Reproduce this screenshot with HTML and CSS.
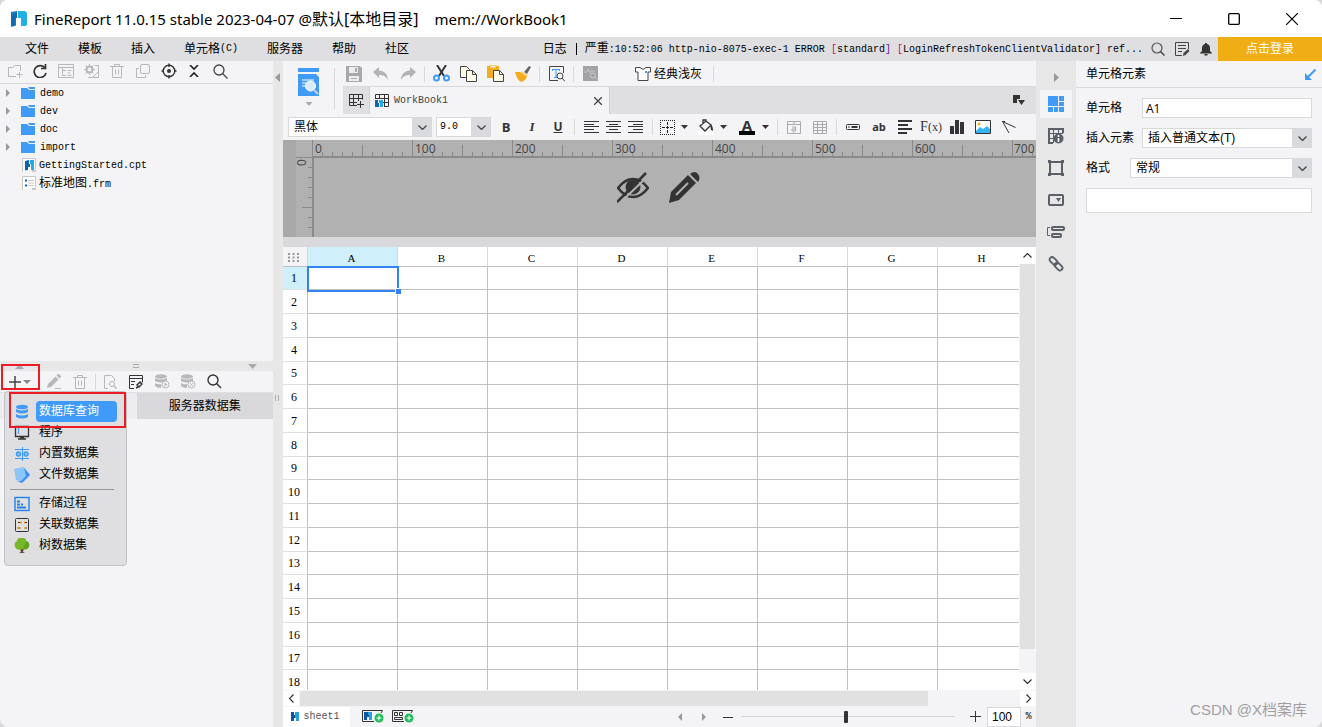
FILE: index.html
```html
<!DOCTYPE html>
<html lang="zh-CN">
<head>
<meta charset="utf-8">
<title>FineReport</title>
<link rel="stylesheet" href="styles.css">
</head>
<body>
<div class="window">
<header class="titlebar">
<svg class="logo" width="18" height="18" viewBox="0 0 18 18"><path d="M1 2l6-1v7h4v3H8v4l-7 2z" fill="#0f7fc8"/><path d="M8 1h7l2 2v12l-2 1h-4V8H8z" fill="#22aee6"/><path d="M1 5l6-3v6H5v7l-4 1z" fill="#1569ad"/><path d="M7 8h4v3H8v5H6V8z" fill="#fff"/></svg>
<h1>FineReport 11.0.15 stable 2023-04-07 @<span>默认[本地目录]</span></h1>
<span class="doc">mem://WorkBook1</span>
<div class="wbtns">
<button aria-label="最小化"><svg width="12" height="12" viewBox="0 0 12 12"><path d="M0 5.500h12" stroke="#000"/></svg></button>
<button aria-label="最大化"><svg width="12" height="12" viewBox="0 0 12 12"><rect x=".7" y=".7" width="10.600" height="10.600" rx="1" fill="none" stroke="#000" stroke-width="1.300"/></svg></button>
<button aria-label="关闭"><svg width="12" height="12" viewBox="0 0 12 12"><path d="M0 0l12 12M12 0L0 12" stroke="#000" stroke-width="1.200"/></svg></button>
</div>
</header>
<nav class="menubar">
<button>文件</button><button>模板</button><button>插入</button><button>单元格<span class="mono">(C)</span></button><button>服务器</button><button>帮助</button><button>社区</button>
<div class="log"><span>日志</span><i></i><span>严重<span class="mono">:10:52:06 http-nio-8075-exec-1 ERROR <b>[</b>standard<em>]</em> <b>[</b>LoginRefreshTokenClientValidator] ref...</span></span></div>
<button class="mi" aria-label="搜索"><svg width="14" height="14" viewBox="0 0 14 14"><circle cx="6" cy="6" r="5" fill="none" stroke="#555"  stroke-width="1.200"/><path d="M9.500 9.500l4 4" stroke="#444" stroke-width="1.500"/></svg></button>
<button class="mi" aria-label="笔记"><svg width="15" height="15" viewBox="0 0 15 15" fill="none" stroke="#444"><path d="M13.500 7V.5h-13v13H7M3 3.500h8M3 6.500h8M3 9.500h4"/><path d="M13 7l1.500 2-4 4-2.500 1 .5-3z" fill="#444" stroke="none"/></svg></button>
<button class="mi" aria-label="通知"><svg width="12" height="14" viewBox="0 0 12 14" fill="#333"><path d="M5 1h2v1c2 .5 3 2 3 4v3l2 2v.5H0V11l2-2V6c0-2 1-3.500 3-4zM4.500 12h3v1.500h-3z"/></svg></button>
<button class="login">点击登录</button>
</nav>
<main class="main">
<aside class="left">
<div class="tools tree-tools">
<button aria-label="新建文件夹"><svg width="16" height="14" viewBox="0 0 16 14" fill="none" stroke="#b8b8bb"><path d="M9 12.500H1.500v-9H6l1.500-2h6V7M12.500 8v6M9.500 10.500h6"/></svg></button>
<button aria-label="刷新"><svg width="14" height="14" viewBox="0 0 14 14" fill="none" stroke="#333" stroke-width="1.700"><path d="M12 4a6 6 0 1 0 1 5"/><path d="M12.500 0v4.500H8"/></svg></button>
<button aria-label="详情"><svg width="16" height="14" viewBox="0 0 16 14" fill="none" stroke="#b8b8bb"><path d="M.5.500h15v13H.5zM0 3.500h16M4.500 4v8M4 6.500h4M4 11.500h4M9.500 6.500h4M9.500 9h3M9.500 11.500h4"/></svg></button>
<button aria-label="设置"><svg width="16" height="14" viewBox="0 0 16 14" fill="none" stroke="#b8b8bb"><circle cx="5.500" cy="5.500" r="3" stroke-width="2"/><path d="M5.500 0v2M5.500 9v2M0 5.500h2M9 5.500h2M1.500 1.500l1.500 1.500M8 8l1.500 1.500M9.500 1.500L8 3M1.500 9.500L3 8M11 1.500h3.500v12H4M9 13l5-5"/></svg></button>
<button aria-label="删除"><svg width="14" height="14" viewBox="0 0 14 14" fill="none" stroke="#b8b8bb"><path d="M0 2.500h14M4.500 2V.5h5V2M2.500 3v10.500h9V3M5.500 5.500v5M8.500 5.500v5"/></svg></button>
<button aria-label="复制"><svg width="14" height="14" viewBox="0 0 14 14" fill="none" stroke="#b8b8bb"><rect x="4.500" y=".5" width="9" height="9" rx="1.500"/><path d="M3 4.500H.5v9h9V11"/></svg></button>
<button aria-label="定位"><svg width="16" height="16" viewBox="0 0 16 16" fill="none" stroke="#333" stroke-width="1.400"><circle cx="8" cy="8" r="5.800"/><path d="M8 .5V4M8 12v3.500M.5 8H3M13 8h2.500"/><circle cx="8" cy="8" r="2" fill="#333" stroke="none"/></svg></button>
<button aria-label="折叠"><svg width="10" height="12" viewBox="0 0 10 12" fill="none" stroke="#222" stroke-width="1.600"><path d="M1 0l4 4 4-4M1 12l4-4 4 4"/></svg></button>
<button aria-label="搜索"><svg width="15" height="15" viewBox="0 0 15 15" fill="none" stroke="#444" stroke-width="1.300"><circle cx="6" cy="6" r="5"/><path d="M9.500 9.500l5 5"/></svg></button>
</div>
<ul class="tree">
<li><svg class="tw" width="5" height="8" viewBox="0 0 5 8"><path d="M0 0l4 4-4 4z" fill="#999"/></svg><svg class="fd" width="14" height="12" viewBox="0 0 14 12"><path d="M0 1h6l2 2h6v9H0z" fill="#409bf8"/><path d="M7 0h7v2H8.500z" fill="#409bf8"/></svg><span class="mono">demo</span></li>
<li><svg class="tw" width="5" height="8" viewBox="0 0 5 8"><path d="M0 0l4 4-4 4z" fill="#999"/></svg><svg class="fd" width="14" height="12" viewBox="0 0 14 12"><path d="M0 1h6l2 2h6v9H0z" fill="#409bf8"/><path d="M7 0h7v2H8.500z" fill="#409bf8"/></svg><span class="mono">dev</span></li>
<li><svg class="tw" width="5" height="8" viewBox="0 0 5 8"><path d="M0 0l4 4-4 4z" fill="#999"/></svg><svg class="fd" width="14" height="12" viewBox="0 0 14 12"><path d="M0 1h6l2 2h6v9H0z" fill="#409bf8"/><path d="M7 0h7v2H8.500z" fill="#409bf8"/></svg><span class="mono">doc</span></li>
<li><svg class="tw" width="5" height="8" viewBox="0 0 5 8"><path d="M0 0l4 4-4 4z" fill="#999"/></svg><svg class="fd" width="14" height="12" viewBox="0 0 14 12"><path d="M0 1h6l2 2h6v9H0z" fill="#409bf8"/><path d="M7 0h7v2H8.500z" fill="#409bf8"/></svg><span class="mono">import</span></li>
<li class="leaf"><svg width="14" height="14" viewBox="0 0 14 14"><path d="M.5 14V.5h13V11" fill="#fff" stroke="#c8c8c8"/><path d="M3 3l4-1v4h1v3H6v3l-3 .5z" fill="#0b67b1"/><path d="M8 2h4v10H9V6H8z" fill="#24a9e6"/><path d="M10 13h4" stroke="#c8c8c8" stroke-width="2"/></svg><span class="mono">GettingStarted.cpt</span></li>
<li class="leaf"><svg width="14" height="14" viewBox="0 0 14 14"><path d="M.5 14V.5h13V11" fill="#fff" stroke="#c8c8c8"/><path d="M3 4.500h2M3 9.500h2" stroke="#0b67b1" stroke-width="2"/><path d="M6 4.500h6M6 7h6M6 9.500h6" stroke="#c8c8c8"/><path d="M10 13h4" stroke="#c8c8c8" stroke-width="2"/></svg><span>标准地图<span class="mono">.frm</span></span></li>
</ul>
<div class="hsplit"><svg width="9" height="5" viewBox="0 0 9 5"><path d="M0 5l4.500-5L9 5z" fill="#aaa"/></svg><svg width="6" height="4" viewBox="0 0 6 4"><path d="M0 .5h6M0 3.500h6" stroke="#aaa"/></svg><svg width="9" height="5" viewBox="0 0 9 5"><path d="M0 0h9L4.500 5z" fill="#aaa"/></svg></div>
<section class="data">
<div class="tools data-tools">
<button class="add" aria-label="添加"><svg width="23" height="12" viewBox="0 0 23 12"><path d="M0 6h12M6 0v12" stroke="#444" stroke-width="1.500"/><path d="M14 4h8l-4 4z" fill="#888"/></svg></button>
<button aria-label="编辑"><svg width="15" height="15" viewBox="0 0 15 15" fill="#b8b8bb"><path d="M0 14l1-4 7.500-7.500 3 3L4 13zM9.500 1.500L11 0h1l2 2v1l-1.500 1.500z"/><path d="M8 14.500h6" stroke="#b8b8bb"/></svg></button>
<button aria-label="删除"><svg width="14" height="14" viewBox="0 0 14 14" fill="none" stroke="#b8b8bb"><path d="M0 2.500h14M4.500 2V.5h5V2M2.500 3v10.500h9V3M5.500 5.500v5M8.500 5.500v5"/></svg></button>
<i class="sep"></i>
<button aria-label="预览"><svg width="13" height="14" viewBox="0 0 13 14" fill="none" stroke="#b8b8bb"><path d="M4 13.500H.5V.5h7l3 3V6"/><circle cx="8" cy="9" r="2.500"/><path d="M10 11l2.500 2.500" stroke-width="1.500"/></svg></button>
<button aria-label="连接"><svg width="14" height="14" viewBox="0 0 14 14" fill="none" stroke="#333"><path d="M5 13.500H.5v-13h13V6M0 3.500h14M2 6.500h4M2 9.500h3"/><path d="M8 10l3-3 2 2-3 3zM7 13l2-1M13 7l1-1" stroke-width="1.500"/></svg></button>
<button aria-label="执行"><svg width="15" height="15" viewBox="0 0 15 15" fill="#b8b8bb"><ellipse cx="6" cy="2.500" rx="6" ry="2.200"/><path d="M0 4q6 3 12 0v3q-6 3-12 0zM0 9q3 2 6 1v4q-4 0-6-2z"/><circle cx="10.500" cy="10.500" r="3.500" fill="#f4f4f6" stroke="#b8b8bb"/><path d="M9.500 8.500v4l3-2z"/></svg></button>
<button aria-label="清除"><svg width="15" height="15" viewBox="0 0 15 15" fill="#b8b8bb"><ellipse cx="6" cy="2.500" rx="6" ry="2.200"/><path d="M0 4q6 3 12 0v3q-6 3-12 0zM0 9q3 2 6 1v4q-4 0-6-2z"/><circle cx="10.500" cy="10.500" r="3.500" fill="#f4f4f6" stroke="#b8b8bb"/><path d="M9 9l3 3M12 9l-3 3" stroke="#b8b8bb"/></svg></button>
<button aria-label="搜索"><svg width="15" height="15" viewBox="0 0 15 15" fill="none" stroke="#333" stroke-width="1.400"><circle cx="6" cy="6" r="5"/><path d="M9.500 9.500l4.500 4.500"/></svg></button>
</div>
<div class="data-tabs"><button aria-label="模板数据集"></button><button class="server">服务器数据集</button></div>
<div class="popup">
<button class="on"><svg width="16" height="16" viewBox="0 0 16 16" fill="#409bf8"><ellipse cx="8" cy="3" rx="6" ry="2.300"/><path d="M2 5q6 3 12 0v3q-6 3-12 0zM2 10q6 3 12 0v3q-6 3-12 0z"/></svg><span>数据库查询</span></button>
<button><svg width="16" height="16" viewBox="0 0 16 16" fill="none" stroke="#333"><path d="M1.500 1.500h13v10h-13zM4 14h8" stroke-width="1.300"/><path d="M6 12.500h4" stroke-width="2"/><path d="M3.500 4h2M4.500 4v4M3.500 8h2" stroke="#409bf8"/></svg><span>程序</span></button>
<button><svg width="16" height="16" viewBox="0 0 16 16" fill="none" stroke="#409bf8"><path d="M8.500 1v14M1 3.500h14M1 12.500h14"/><circle cx="4.500" cy="8" r="2" fill="#8dc4fa" stroke-width="1.500"/><circle cx="12" cy="8" r="2" fill="#8dc4fa" stroke-width="1.500"/></svg><span>内置数据集</span></button>
<button><svg width="16" height="16" viewBox="0 0 16 16"><path d="M0 2l9-2 2 1 5 7-7 7-7-2z" fill="#8dc4fa"/><path d="M10 1l6 7-8 8-5-2 4 0 5-5z" fill="#3c91ec"/></svg><span>文件数据集</span></button>
<hr>
<button><svg width="16" height="16" viewBox="0 0 16 16" fill="none" stroke="#2382ea"><rect x="1" y="1.500" width="14" height="13" stroke-width="1.400"/><path d="M3 5.500h3M3 8.500h3M7 8.500h2M3 11.500h9" stroke-width="1.800"/></svg><span>存储过程</span></button>
<button><svg width="16" height="16" viewBox="0 0 16 16" fill="none" stroke="#333"><rect x="1.500" y="1.500" width="13" height="13" rx="1"/><path d="M4 5.500h2.500M10 5.500h3M4 11h2.500M10 11h3"/><path d="M6 5.500h2M10 5.500h1M3 11h2M10 11h2" stroke="#f5a11c" stroke-width="2"/></svg><span>关联数据集</span></button>
<button><svg width="16" height="16" viewBox="0 0 16 16"><path d="M6 10h4l-1 4 2 1H5l2-1z" fill="#5b4130"/><path d="M8 0c2-1 4 1 4 3 3 1 4 4 3 6-2 3-4 3-7 2-3 2-6 0-7-2-1-3 0-5 2-6 0-2 2-4 5-3z" fill="#76b82a"/><path d="M10 0q3 2 1 6l-2 5q5 1 6-3t-3-5z" fill="#5ea51f"/></svg><span>树数据集</span></button>
</div>
<div class="mark mark-a"></div><div class="mark mark-b"></div>
</section>
</aside>
<div class="vsplit"><svg width="5" height="9" viewBox="0 0 5 9"><path d="M5 0v9L0 4.500z" fill="#999"/></svg><svg class="grip" width="4" height="6" viewBox="0 0 4 6"><path d="M.5 0v6M3.500 0v6" stroke="#aaa"/></svg></div>
<section class="center">
<div class="head">
<button class="tpl" aria-label="预览模板"><svg width="22" height="38" viewBox="0 0 22 38"><path d="M0 0h21v4H0zM0 6h18l3 3v19H0z" fill="#409bf8"/><path d="M4 12h12M4 15h5M4 18h3" stroke="#fff"/><circle cx="12.500" cy="18" r="5" fill="#d9ebfd" stroke="#fff"/><path d="M16 22l4 4" stroke="#ccc" stroke-width="2"/><path d="M7.500 34h7l-3.500 4z" fill="#aaa"/></svg></button>
<div class="head-right">
<div class="tools main-tools">
<button aria-label="保存"><svg width="16" height="16" viewBox="0 0 16 16"><path d="M0 0h14l2 2v14H0z" fill="#a9a9ad"/><path d="M3 1h9v6H3zM3 10h10v5H3z" fill="#ededf0"/><path d="M9 2h2v4H9z" fill="#a9a9ad"/><path d="M5 12.500h6" stroke="#a9a9ad"/></svg></button>
<button aria-label="撤销"><svg width="16" height="16" viewBox="0 0 16 16"><path d="M0 6l6-5v3.500c5 0 9 4 9 9.500-2-4-5-5-9-5v3z" fill="#b3b3b7"/></svg></button>
<button aria-label="重做"><svg width="16" height="16" viewBox="0 0 16 16"><path d="M16 6l-6-5v3.500c-5 0-9 4-9 9.500 2-4 5-5 9-5v3z" fill="#b3b3b7"/></svg></button>
<i class="sep"></i>
<button aria-label="剪切"><svg width="17" height="17" viewBox="0 0 17 17" fill="none"><path d="M4 0l7 11M13 0L6 11" stroke="#333" stroke-width="2"/><circle cx="3.500" cy="13" r="2.500" stroke="#409bf8" stroke-width="2"/><circle cx="13.500" cy="13" r="2.500" stroke="#409bf8" stroke-width="2"/></svg></button>
<button aria-label="复制"><svg width="17" height="16" viewBox="0 0 17 16" fill="#fffae6" stroke="#444"><path d="M.5.500h6l3 3v8h-9z"/><path d="M6.500 4.500h6l4 4v7h-10z"/><path d="M12.500 4.500v4h4" fill="none"/></svg></button>
<button aria-label="粘贴"><svg width="17" height="17" viewBox="0 0 17 17"><path d="M0 1h12v12H0z" fill="#f5ab1c"/><path d="M3 0h6v3H3z" fill="#fff" stroke="#f5ab1c"/><path d="M6.500 5.500h6l4 4v7h-10z" fill="#fffae6" stroke="#444"/><path d="M12.500 5.500v4h4" fill="none" stroke="#444"/></svg></button>
<button aria-label="格式刷"><svg width="16" height="16" viewBox="0 0 16 16"><path d="M9 6l5-6 2 1-4 7z" fill="#666"/><path d="M7 5l6 4-1 2-7-4z" fill="#fbd588"/><path d="M0 6h5l7 5q-2 4-6 5-4-2-6-10z" fill="#f5ab1c"/></svg></button>
<i class="sep"></i>
<button aria-label="查找"><svg width="16" height="16" viewBox="0 0 16 16" fill="none"><path d="M9 14.500H.5V.5h14V7" stroke="#444"/><path d="M3 3.500h8M7 3.500v8M5 11.500h4M3.500 3v2M10.500 3v2" stroke="#409bf8"/><circle cx="11" cy="10" r="3" stroke="#444"/><path d="M13 12l3 3.500" stroke="#444"/></svg></button>
<i class="sep"></i>
<button aria-label="分析"><svg width="15" height="15" viewBox="0 0 15 15"><path d="M0 0h15v15H0z" fill="#a3a3a6"/><path d="M1 6h3l1-3 2 4 1-2h4" fill="none" stroke="#c5c5c7"/><circle cx="10" cy="9.500" r="2.500" fill="none" stroke="#ccc"/><path d="M12 11.500l2 2" stroke="#ccc"/></svg></button>
<button class="skin"><svg width="16" height="14" viewBox="0 0 16 14"><path d="M5 .5l3 2 3-2h4.500V5H13v8.500H3V5H.5V.5z" fill="#fff" stroke="#444"/><path d="M10 4h2v2h-2z" fill="#409bf8"/></svg>经典浅灰</button>
<i class="sep"></i>
</div>
<div class="tabs">
<button class="newtab" aria-label="新建"><svg width="15" height="15" viewBox="0 0 15 15" fill="none" stroke="#333"><path d="M.5 1.500h13v5M.5 1v11.500H8M0 5.500h14M0 9.500h8M4.500 1v11M9.500 1v7M11.500 8v7M8 11.500h7"/></svg></button>
<div class="tab"><svg width="14" height="14" viewBox="0 0 14 14" fill="none" stroke="#333"><path d="M.5 5V.5h13v12H9M0 4.500h14M8 8.500h6M4.500 0v5M9.500 0v13"/><path d="M0 6h3v3h1v4H0z" fill="#0b67b1" stroke="none"/><path d="M4 6h4v7H5V9H4z" fill="#24a9e6" stroke="none"/></svg><span class="mono">WorkBook1</span><button aria-label="关闭"><svg width="8" height="8" viewBox="0 0 8 8"><path d="M0 0l8 8M8 0L0 8" stroke="#444" stroke-width="1.300"/></svg></button></div>
<button class="tablist" aria-label="标签列表"><svg width="12" height="11" viewBox="0 0 12 11" fill="#333"><path d="M0 0h7v4H4v4H0zM5 5h7L8.500 10z"/></svg></button>
</div>
</div>
</div>
<div class="tools format">
<label class="combo font"><select aria-label="字体"><option>黑体</option></select><svg width="9" height="5" viewBox="0 0 9 5"><path d="M.5.500l4 4 4-4" fill="none" stroke="#444" stroke-width="1.300"/></svg></label>
<label class="combo size"><select aria-label="字号"><option>9.0</option></select><svg width="9" height="5" viewBox="0 0 9 5"><path d="M.5.500l4 4 4-4" fill="none" stroke="#444" stroke-width="1.300"/></svg></label>
<button class="bold">B</button><button class="ital">I</button><button class="undl">U</button>
<i class="sep"></i>
<button class="s first" aria-label="左对齐"><svg width="15" height="12" viewBox="0 0 15 12" stroke="#333"><path d="M0 .5h15M0 3.500h10M0 5.500h15M0 8.500h10M0 11.500h15"/></svg></button>
<button class="s" aria-label="居中"><svg width="15" height="12" viewBox="0 0 15 12" stroke="#333"><path d="M0 .5h15M3 3.500h9M0 5.500h15M3 8.500h9M0 11.500h15"/></svg></button>
<button class="s" aria-label="右对齐"><svg width="15" height="12" viewBox="0 0 15 12" stroke="#333"><path d="M0 .5h15M5 3.500h10M0 5.500h15M5 8.500h10M0 11.500h15"/></svg></button>
<i class="sep wide"></i>
<button class="s" aria-label="边框"><svg width="15" height="15" viewBox="0 0 15 15" fill="none" stroke="#222"><path d="M0 .5h15M0 14.500h15M.5 0v15M14.500 0v15" stroke-dasharray="1 1" shape-rendering="crispEdges"/><path d="M2 7.500h11M7.500 2v11" stroke-dasharray="3 1" shape-rendering="crispEdges"/></svg></button>
<button class="c" aria-label="边框选项"><svg width="7" height="4" viewBox="0 0 7 4"><path d="M0 0h7L3.500 4z" fill="#333"/></svg></button>
<button class="s grp" aria-label="填充"><svg width="16" height="16" viewBox="0 0 16 16"><path d="M0 12h16v4H0z" fill="#fff"/><path d="M2 7l6-5 5 4-6 6zM5 5V1h3v2" fill="none" stroke="#333" stroke-width="1.300"/><path d="M12 5q3 1 3 7l-2-1z" fill="#333"/></svg></button>
<button class="c" aria-label="填充选项"><svg width="7" height="4" viewBox="0 0 7 4"><path d="M0 0h7L3.500 4z" fill="#333"/></svg></button>
<button class="s fc" aria-label="文字颜色">A</button>
<button class="c" aria-label="颜色选项"><svg width="7" height="4" viewBox="0 0 7 4"><path d="M0 0h7L3.500 4z" fill="#333"/></svg></button>
<i class="sep wide"></i>
<button aria-label="合并"><svg width="14" height="13" viewBox="0 0 14 13" fill="none" stroke="#aaaaae"><path d="M.5.500h13v12H.5zM0 3.500h14M7 0v3M7 11v2M5 6h3.500v4H5V8h3"/></svg></button>
<button aria-label="表格"><svg width="14" height="13" viewBox="0 0 14 13" fill="none" stroke="#aaaaae"><path d="M.5.500h13v12H.5zM0 3.500h14M0 6.500h14M0 9.500h14M4.500 0v13M9.500 0v13"/></svg></button>
<i class="sep"></i>
<button aria-label="控件"><svg width="14" height="6" viewBox="0 0 14 6" fill="none" stroke="#333"><rect x=".5" y=".5" width="13" height="5" rx="1"/><path d="M2 3h2M5.500 2.500h6M5.500 3.500h6"/></svg></button>
<button class="ab">ab</button>
<button aria-label="文本"><svg width="15" height="14" viewBox="0 0 15 14" stroke="#333" stroke-width="1.800"><path d="M0 1h14M0 5h10M0 9h14M0 13h9"/></svg></button>
<button class="fx">F<small>(x)</small></button>
<button aria-label="图表"><svg width="14" height="14" viewBox="0 0 14 14" fill="#333"><path d="M0 6h4v8H0zM5 0h4v14H5zM10 2h4v12h-4z"/></svg></button>
<button aria-label="图片"><svg width="16" height="14" viewBox="0 0 16 14"><path d="M.5.500h15v13H.5z" fill="#fff" stroke="#333"/><path d="M1 11l4-4 3 2 4-3 3 3v4H1z" fill="#34b6f3"/><circle cx="4" cy="4" r="1.500" fill="#f5ab1c"/></svg></button>
<button aria-label="斜线"><svg width="14" height="13" viewBox="0 0 14 13" fill="none" stroke="#333"><path d="M.5.500L7 12M.5.500l13 6M.5.500H3"/></svg></button>
</div>
<div class="canvas">
<div class="corner"></div>
<svg class="rule-h" height="18" width="100%"><defs><pattern id="th" width="100" height="18" patternUnits="userSpaceOnUse"><path d="M.5 0v18M50.500 5v13M10.500 12v6M20.500 12v6M30.500 12v6M40.500 12v6M60.500 12v6M70.500 12v6M80.500 12v6M90.500 12v6" stroke="#8a8a8a"/></pattern></defs><rect width="100%" height="18" fill="url(#th)"/><path d="M0 17h2000" stroke="#8a8a8a" stroke-width="2"/><g><text x="3" y="13">0</text><text x="103" y="13">100</text><text x="203" y="13">200</text><text x="303" y="13">300</text><text x="403" y="13">400</text><text x="503" y="13">500</text><text x="603" y="13">600</text><text x="702" y="13">700</text></g></svg>
<svg class="rule-v" width="18" height="80" viewBox="0 0 18 80"><path d="M0 .5h18M12 10.500h6M12 20.500h6M12 30.500h6M12 40.500h6M6 50.500h12M12 60.500h6M12 70.500h6" stroke="#8a8a8a"/><path d="M17 0v80" stroke="#8a8a8a" stroke-width="2"/><text transform="translate(10 9) rotate(-90)">0</text></svg>
<div class="stage">
<svg width="32" height="31" viewBox="0 0 32 31" fill="none" stroke="#333"><path d="M1 16Q8 7 16 7t15 9q-7 9-15 9T1 16z" stroke-width="2.500"/><circle cx="16" cy="15" r="7" fill="#333"/><path d="M0 30L29 1" stroke-width="2.500"/><path d="M3 31L32 3" stroke="#b1b1b1" stroke-width="2"/></svg>
<svg width="31" height="31" viewBox="0 0 31 31" fill="#333"><path d="M0 31l2-11L19 3l8 8-17 17zM21 2q5-4 8 0t0 8z"/><path d="M7 23L19 11" fill="none" stroke="#b1b1b1" stroke-width="2"/><path d="M20 2l9 9" stroke="#b1b1b1"/></svg>
</div>
</div>
<div class="band"></div>
<div class="sheet">
<div class="grid">
<table>
<thead><tr><th class="all"><svg width="11" height="9" viewBox="0 0 11 9"><path d="M1 0v9M5.500 0v9M10 0v9" stroke="#999" stroke-width="2" stroke-dasharray="2 1.500"/></svg></th><th class="sel">A</th><th>B</th><th>C</th><th>D</th><th>E</th><th>F</th><th>G</th><th>H</th></tr></thead>
<tbody>
<tr><th class="sel">1<td class="cur"><i></i><td><td><td><td><td><td><td>
<tr><th>2<td><td><td><td><td><td><td><td>
<tr><th>3<td><td><td><td><td><td><td><td>
<tr><th>4<td><td><td><td><td><td><td><td>
<tr><th>5<td><td><td><td><td><td><td><td>
<tr><th>6<td><td><td><td><td><td><td><td>
<tr><th>7<td><td><td><td><td><td><td><td>
<tr><th>8<td><td><td><td><td><td><td><td>
<tr><th>9<td><td><td><td><td><td><td><td>
<tr><th>10<td><td><td><td><td><td><td><td>
<tr><th>11<td><td><td><td><td><td><td><td>
<tr><th>12<td><td><td><td><td><td><td><td>
<tr><th>13<td><td><td><td><td><td><td><td>
<tr><th>14<td><td><td><td><td><td><td><td>
<tr><th>15<td><td><td><td><td><td><td><td>
<tr><th>16<td><td><td><td><td><td><td><td>
<tr><th>17<td><td><td><td><td><td><td><td>
<tr><th>18<td><td><td><td><td><td><td><td>
</tbody></table>
</div>
<div class="vbar"><button aria-label="向上"><svg width="9" height="5" viewBox="0 0 9 5"><path d="M.5 4.500l4-4 4 4" fill="none" stroke="#333" stroke-width="1.200"/></svg></button><div class="thumb"></div><button aria-label="向下"><svg width="9" height="5" viewBox="0 0 9 5"><path d="M.5.500l4 4 4-4" fill="none" stroke="#333" stroke-width="1.200"/></svg></button></div>
</div>
<div class="hbar"><button aria-label="向左"><svg width="5" height="9" viewBox="0 0 5 9"><path d="M4.500.500l-4 4 4 4" fill="none" stroke="#333" stroke-width="1.200"/></svg></button><div class="thumb"></div><button aria-label="向右"><svg width="5" height="9" viewBox="0 0 5 9"><path d="M.5.500l4 4-4 4" fill="none" stroke="#333" stroke-width="1.200"/></svg></button></div>
<footer class="status">
<button class="sheettab"><svg width="8" height="9" viewBox="0 0 8 9"><path d="M0 0h3v3h1v3H3v3H0z" fill="#0b57a0"/><path d="M4 0h4v9H5V6H4z" fill="#2a9fe0"/></svg><span class="mono">sheet1</span></button>
<button class="ns" aria-label="新建报表"><svg width="22" height="13" viewBox="0 0 22 13"><path d="M12 11.500H.5V.5h20L19 3" fill="none" stroke="#333"/><path d="M2 2h4v3h1v2H5v3H2z" fill="#0b57a0"/><path d="M6 2h4v8H7V5H6z" fill="#2a9fe0"/><circle cx="17" cy="8" r="4.500" fill="#20bd5b"/><path d="M14.500 8h5M17 5.500v5" stroke="#fff"/></svg></button>
<button class="ns" aria-label="新建决策报表"><svg width="22" height="13" viewBox="0 0 22 13" fill="none"><path d="M12 11.500H.5V.5h20L19 3M2.500 2.500h3v3h-3zM7.500 2.500h3v3h-3zM2.500 7.500h8v2h-8z" stroke="#333"/><circle cx="17" cy="8" r="4.500" fill="#20bd5b"/><path d="M14.500 8h5M17 5.500v5" stroke="#fff"/></svg></button>
<div class="zoomer">
<button class="nav" aria-label="上一页"><svg width="4" height="8" viewBox="0 0 4 8"><path d="M4 0v8L0 4z" fill="#999"/></svg></button>
<button class="nav" aria-label="下一页"><svg width="4" height="8" viewBox="0 0 4 8"><path d="M0 0v8l4-4z" fill="#999"/></svg></button>
<button class="nav" aria-label="缩小"><svg width="10" height="10" viewBox="0 0 10 10"><path d="M0 5.500h10" stroke="#333"/></svg></button>
<input type="range" min="0" max="100" value="49" aria-label="缩放">
<button class="nav" aria-label="放大"><svg width="11" height="11" viewBox="0 0 11 11"><path d="M0 5.500h11M5.500 0v11" stroke="#333"/></svg></button>
<input class="pct" type="text" value="100" aria-label="缩放比例"><span class="mono">%</span>
</div>
</footer>
</section>
<nav class="rail">
<button class="fold" aria-label="收起"><svg width="5" height="9" viewBox="0 0 5 9"><path d="M0 0v9l5-4.500z" fill="#999"/></svg></button>
<button class="on" aria-label="单元格元素"><svg width="16" height="16" viewBox="0 0 16 16" fill="#409bf8"><path d="M0 0h10v10H0zM11 0h5v5h-5zM11 6h5v4h-5zM0 11h5v5H0zM6 11h4v5H6zM11 11h5v5h-5z"/></svg></button>
<button aria-label="单元格属性"><svg width="16" height="16" viewBox="0 0 16 16" fill="none" stroke="#5a5f69"><path d="M15 5V1H1v14h4" stroke-width="2"/><path d="M5.500 1v14M1 5.500h14M10.500 1v4M1 10.500h4"/><circle cx="10.500" cy="10.500" r="5" fill="#5a5f69" stroke="none"/><path d="M10.500 7v2M10.500 10v4" stroke="#fff" stroke-width="1.500"/></svg></button>
<button aria-label="悬浮元素"><svg width="16" height="16" viewBox="0 0 16 16" fill="none" stroke="#5a5f69"><path d="M2 2h12v12H2z" stroke-width="2"/><path d="M0 1.500h3M13 1.500h3M0 14.500h3M13 14.500h3" stroke-width="3"/></svg></button>
<button aria-label="控件设置"><svg width="16" height="12" viewBox="0 0 16 12"><rect x="1" y="1" width="14" height="10" rx="1" fill="none" stroke="#5a5f69" stroke-width="2"/><path d="M8 4h5l-2.500 4z" fill="#5a5f69"/></svg></button>
<button aria-label="条件属性"><svg width="18" height="12" viewBox="0 0 18 12" fill="none" stroke="#5a5f69"><path d="M3 1.500H.5v8H3"/><rect x="5" y="1" width="12" height="3" rx="1" stroke-width="2"/><rect x="5" y="8" width="9" height="3" rx="1" stroke-width="2"/></svg></button>
<button aria-label="超级链接"><svg width="16" height="16" viewBox="0 0 16 16" fill="none" stroke="#5a5f69" stroke-width="1.900"><rect x="1" y="2.500" width="9" height="5" rx="2.500" transform="rotate(45 5.500 5)"/><rect x="6" y="8" width="9" height="5" rx="2.500" transform="rotate(45 10.500 10.500)"/></svg></button>
</nav>
<aside class="props">
<h2>单元格元素<svg width="11" height="11" viewBox="0 0 11 11"><path d="M10.500.500L3 8" stroke="#409bf8" stroke-width="2"/><path d="M0 4v7h7z" fill="#409bf8"/></svg></h2>
<form>
<div class="row"><label class="wide" for="cell">单元格</label><input id="cell" type="text" value="A1"></div>
<div class="row"><label class="wide" for="ins">插入元素</label><span class="combo"><select id="ins"><option>插入普通文本(T)</option></select><svg width="9" height="5" viewBox="0 0 9 5"><path d="M.5.500l4 4 4-4" fill="none" stroke="#444" stroke-width="1.300"/></svg></span></div>
<div class="row"><label class="narrow" for="fmt">格式</label><span class="combo"><select id="fmt"><option>常规</option></select><svg width="9" height="5" viewBox="0 0 9 5"><path d="M.5.500l4 4 4-4" fill="none" stroke="#444" stroke-width="1.300"/></svg></span></div>
<input class="value" type="text" aria-label="值">
</form>
</aside>
</main>
<div class="watermark">CSDN @X档案库</div>
</div>
</body>
</html>
```
FILE: styles.css
```css
* { box-sizing: border-box; }
body { margin: 0; background: #d8d8da; font: 12px/16px "Liberation Sans", "Noto Sans CJK SC", sans-serif; color: #000; }
button { border: 0; padding: 0; margin: 0; background: none; font: inherit; color: inherit; display: flex; align-items: center; justify-content: center; flex-shrink: 0; }
input, select { font: inherit; color: inherit; border: 1px solid #d9d9dc; background: #fff; border-radius: 0; margin: 0; outline: 0; min-width: 0; }
svg { display: block; flex-shrink: 0; }
.mono { font: 10px/16px "Liberation Mono", monospace; }
.window { position: relative; height: 100vh; display: flex; flex-direction: column; background: #f4f4f6; border-radius: 8px; overflow: hidden; }

.titlebar { height: 37px; flex-shrink: 0; background: #fff; display: flex; align-items: center; padding-left: 10px; font: 15px/22px "Noto Sans", "Noto Sans CJK SC", sans-serif; white-space: nowrap; }
.titlebar h1 { font: inherit; margin: 0 16px 0 6px; }
.titlebar h1 span { font-size: 16px; }
.wbtns { margin-left: auto; display: flex; padding-right: 1px; }
.wbtns button { width: 58px; height: 37px; }

.menubar { height: 24px; flex-shrink: 0; background: #dfdfe1; display: flex; align-items: center; padding-left: 25px; }
.menubar button { margin-right: 29px; white-space: nowrap; }
.log { margin-left: auto; display: flex; align-items: center; white-space: nowrap; }
.log > i { width: 1px; height: 12px; background: #000; margin: 0 8px 0 9px; }
.log b { font-weight: 400; color: #e0006c; }
.log em { font-style: normal; color: #60189c; }
.menubar .mi { width: 24px; height: 24px; margin: 0; }
.log + .mi { margin-left: 3px; }
.menubar .login { width: 104px; height: 24px; margin: 0; background: #f0ad14; color: #fff; }

.main { flex: 1; min-height: 0; display: flex; }
.left { width: 273px; flex-shrink: 0; display: flex; flex-direction: column; }
.tools { display: flex; align-items: center; flex-shrink: 0; }
.sep { width: 7px; height: 16px; flex-shrink: 0; background: linear-gradient(#d9d9dc, #d9d9dc) center / 1px 100% no-repeat; }
.tree-tools { height: 23px; border-bottom: 1px solid #d9d9dc; padding: 0 40px 2px 2px; display: grid; grid-template-columns: repeat(9, 1fr); }
.tree-tools button { height: 20px; }
.tree { list-style: none; margin: 0; padding: 0; height: 277px; }
.tree li { height: 18px; display: flex; align-items: center; padding-left: 6px; }
.tree li > span { padding-top: 2px; }
.tree .tw { margin-right: 10px; }
.tree .fd { margin-right: 5px; }
.tree .leaf { padding-left: 22px; }
.tree .leaf svg { margin-right: 3px; }
.hsplit { height: 10px; flex-shrink: 0; background: #e7e7e8; display: flex; align-items: center; justify-content: space-between; padding: 0 16px 0 15px; }
.data { position: relative; flex: 1; }
.data-tools { height: 22px; border-bottom: 1px solid #e0e0e2; }
.data-tools button { width: 26px; height: 20px; }
.data-tools .add { width: 32px; margin: 0 5px 0 4px; }
.data-tools .sep { width: 4px; }
.data-tabs { display: grid; grid-template-columns: 1fr 1fr; height: 26px; background: #ededef; }
.data-tabs .server { background: #d9d9dc; }
.popup { position: absolute; left: 4px; top: 20px; width: 123px; padding: 9px; background: #dfdfe1; border: 1px solid #c2c2c5; border-radius: 4px; }
.popup button { width: 100%; height: 21px; justify-content: flex-start; gap: 6px; }
.popup button span { flex: 1; text-align: left; padding-left: 3px; line-height: 21px; border-radius: 4px; white-space: nowrap; }
.popup .on span { background: #409bf8; color: #fff; }
.popup hr { border: 0; height: 1px; background: #999; margin: 4px 3px 3px -4px; }
.mark { position: absolute; border: 2px solid #ec1c24; pointer-events: none; }
.mark-a { left: 1px; top: -7px; width: 39px; height: 26px; }
.mark-b { left: 9px; top: 21px; width: 117px; height: 36px; }

.vsplit { width: 10px; flex-shrink: 0; background: #e7e7e8; padding: 12px 0 0 2px; }
.vsplit .grip { margin-top: 313px; }

.center { flex: 1; min-width: 0; display: flex; flex-direction: column; }
.head { display: flex; flex-shrink: 0; }
.tpl { width: 57px; padding: 7px 0 0 15px; height: 53px; justify-content: flex-start; align-items: flex-start; background: linear-gradient(#d9d9dc, #d9d9dc) 51px 7px / 1px 41px no-repeat; }
.head-right { flex: 1; min-width: 0; }
.main-tools { height: 25px; }
.main-tools button { width: 27px; height: 24px; }
.main-tools .skin { width: auto; gap: 3px; margin: 0 8px 0 31px; }
.tabs { height: 28px; margin-left: 3px; background: #dfdfe1; display: flex; border-top: 1px solid #d9d9dc; }
.newtab { width: 26px; }
.tab { width: 241px; background: #f4f4f6; border: solid #cfcfd2; border-width: 0 1px; display: flex; align-items: center; gap: 5px; padding: 0 7px 0 5px; color: #444; }
.tab button { margin-left: auto; }
.tablist { margin-left: auto; width: 34px; }
.format { height: 26px; padding-left: 5px; }
.format button { width: 26px; height: 24px; }
.format .s { width: 22px; }
.format .c { width: 12px; }
.format .first { margin-left: 2px; }
.format .wide { margin-left: 3px; }
.format .grp { margin-left: 5px; }
.combo { display: grid; grid-template: 100% / 1fr 19px; align-items: center; height: 20px; }
.combo select { grid-area: 1 / 1 / 2 / 3; width: 100%; height: 20px; appearance: none; padding: 0 0 0 5px; background: linear-gradient(#d9dadd, #d9dadd) right / 19px 100% no-repeat #fff; }
.combo svg { grid-area: 1 / 2; justify-self: center; pointer-events: none; }
.font { width: 144px; margin-right: 4px; }
.size { width: 55px; margin-right: 2px; }
.size select { padding-left: 3px; font: 10px/16px "Liberation Mono", monospace; }
.bold { font: 700 13px/16px "Open Sans", sans-serif; }
.ital { font: italic 700 13px/16px "Liberation Serif", serif; }
.undl { font: 700 12px/16px "Open Sans", sans-serif; text-decoration: underline; }
.format .bold, .format .ital, .format .undl, .ab, .fx { color: #333; }
.format .fc { font: 700 15px/13px "Open Sans", sans-serif; color: #333; width: 16px; height: 16px; border-bottom: 4px solid #000; margin: 0 4px 0 10px; }
.format .ab { font: 700 11px/16px "Open Sans", sans-serif; }
.format .fx { font: 14px/16px "Liberation Serif", serif; }
.fx small { font-size: 12px; }

.canvas { height: 97px; flex-shrink: 0; background: #b1b1b1; display: grid; grid-template: 17px 80px / 13px 16px 1fr; overflow: hidden; font: 12px "Open Sans", sans-serif; }
.canvas text { fill: #444; }
.corner { grid-area: 1 / 1 / 3 / 2; background: #a8a8a8; }
.rule-h { grid-area: 1 / 3; }
.rule-v { grid-area: 2 / 2; overflow: visible; }
.stage { grid-area: 2 / 3; display: flex; justify-content: center; gap: 20px; padding-top: 15px; margin-right: 32px; }
.band { height: 10px; flex-shrink: 0; background: #d9d9dc; }
.sheet { flex: 1; min-height: 0; display: flex; background: #fff; }
.grid { flex: 1; min-width: 0; overflow: hidden; }
table { border-collapse: separate; border-spacing: 0; table-layout: fixed; width: 745px; font: 12px/16px "Liberation Serif", serif; }
th, td { padding: 0; height: 24px; border: solid #c0c0c0; border-width: 0 1px 1px 0; font-weight: 400; }
tbody tr:nth-child(4n+1) > * { height: 23px; }
thead th { height: 20px; width: 90px; border-right-color: #d9d9dc; padding: 2px 2px 0 0; font-size: 11px; }
tbody th { border-bottom-color: #e0e0e2; padding-right: 2px; }
thead .all { width: 25px; padding-right: 4px; background: #f4f4f6; }
.all svg { margin: 0 auto; }
.sel { background: #cfeffb; }
.cur { position: relative; }
.cur::before { content: ""; position: absolute; inset: -1px -2px -3px -1px; border: 2px solid #3083f0; }
.cur i { position: absolute; right: -4px; bottom: -5px; width: 6px; height: 6px; background: #3083f0; border: solid #fff; border-width: 1px 0 0 1px; }
.vbar { width: 17px; background: #f4f4f6; display: flex; flex-direction: column; }
.vbar button { height: 17px; background: #fff; }
.vbar .thumb { flex: 1; margin: 0 1px 24px; background: #e1e1e1; }
.hbar { height: 16px; flex-shrink: 0; display: flex; border-top: 1px solid #f4f4f6; }
.hbar button { width: 16px; background: #fff; }
.hbar .thumb { flex: 1; margin: 0 92px 0 1px; background: #e1e1e1; }
.status { height: 21px; flex-shrink: 0; display: flex; align-items: center; }
.sheettab { width: 67px; height: 20px; background: #fff; gap: 4px; color: #555; padding-right: 2px; margin-right: 12px; }
.ns { margin-right: 8px; }
.zoomer { margin-left: auto; display: flex; align-items: center; }
.nav { width: 24px; height: 20px; }
.zoomer input[type=range] { appearance: none; width: 214px; height: 16px; margin: 0 8px 0 1px; border: 0; background: linear-gradient(#d5d5d7, #d5d5d7) center / 100% 1px no-repeat; }
.zoomer input[type=range]::-webkit-slider-thumb { appearance: none; width: 4px; height: 12px; border-radius: 1px; background: #333; }
.pct { width: 34px; height: 20px; padding: 0 0 0 4px; }
.zoomer .mono { width: 15px; text-align: center; }

.rail { width: 40px; flex-shrink: 0; background: #e7e7e8; display: flex; flex-direction: column; align-items: center; gap: 4px; }
.rail button { width: 32px; height: 28px; }
.rail .fold { height: 25px; padding-top: 7px; }
.rail .on { background: #f4f4f6; }
.props { width: 246px; flex-shrink: 0; }
.props h2 { margin: 0; height: 27px; padding: 0 6px 0 10px; border-bottom: 1px solid #d9d9dc; font: inherit; display: flex; align-items: center; justify-content: space-between; }
.props form { padding: 10px 10px 0; display: flex; flex-direction: column; gap: 10px; }
.row { display: flex; align-items: center; }
.row .wide { width: 56px; }
.row .narrow { width: 44px; }
.row input, .row .combo { flex: 1; height: 20px; }
.row input { padding: 0 3px; font-family: "Open Sans", sans-serif; }
.value { height: 25px; width: 100%; }
.watermark { position: absolute; right: 15px; bottom: 5px; font: 15px/24px "Liberation Sans", "Noto Sans CJK SC", sans-serif; color: #a0a0a3; }
```
